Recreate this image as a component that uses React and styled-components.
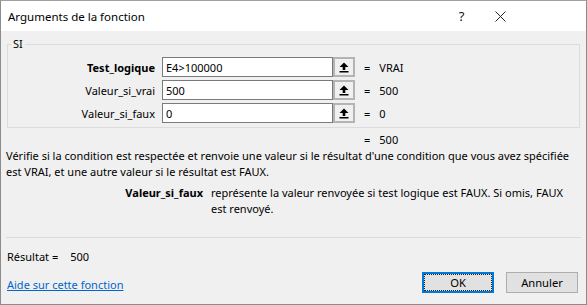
import React from 'react';
import styled, { createGlobalStyle } from 'styled-components';

const Global = createGlobalStyle`
  html, body {
    margin: 0;
    padding: 0;
    background: #f0f0f0;
  }
  body {
    font-family: 'Segoe UI', 'Noto Sans', 'Open Sans', sans-serif;
    font-size: 11px;
    color: #000;
  }
`;

const Window = styled.div`
  width: 587px;
  height: 305px;
  box-sizing: border-box;
  border: 1px solid #8c8c8c;
  border-top-color: #a0a0a0;
  display: flex;
  flex-direction: column;
  background: #f0f0f0;
  overflow: hidden;
`;

const TitleBar = styled.div`
  height: 30px;
  background: #fff;
  display: flex;
  align-items: center;
  padding-left: 7px;
  padding-right: 66px;
`;

const Title = styled.div`
  flex: 1;
  font-size: 11.5px;
`;

const TitleBtn = styled.div`
  width: 39px;
  height: 30px;
  display: flex;
  align-items: center;
  justify-content: center;
  font-size: 13px;
  color: #111;
`;

const Body = styled.div`
  flex: 1;
  display: flex;
  flex-direction: column;
  padding: 6px 6px 0 4px;
`;

const Group = styled.fieldset`
  margin: 0 0 0 2px;
  padding: 0 0 3px 0;
  width: 573px;
  box-sizing: border-box;
  border: 1px solid #dcdcdc;
  height: 91px;
  display: flex;
  flex-direction: column;
  legend {
    margin-left: 3px;
    padding: 0 2px;
    line-height: 14px;
  }
`;

const Rows = styled.div`
  margin-top: 6px;
  display: flex;
  flex-direction: column;
  gap: 3px;
`;

const Row = styled.div`
  display: flex;
  align-items: center;
  height: 20px;
`;

const ArgLabel = styled.div`
  width: 147px;
  text-align: right;
  padding-right: 7px;
  font-weight: ${p => (p.$bold ? 700 : 400)};
`;

const Input = styled.div`
  width: 166px;
  height: 18px;
  border: 1px solid #7a7a7a;
  background: #fff;
  display: flex;
  align-items: center;
  padding-left: 3px;
  box-sizing: content-box;
`;

const RefBtn = styled.div`
  width: 18px;
  height: 16px;
  border: 2px solid #b4b4b4;
  background: #f0f0f0;
  display: flex;
  align-items: center;
  justify-content: center;
`;

const Value = styled.div`
  margin-left: 9px;
  display: flex;
  gap: 9px;
`;

const TotalRow = styled.div`
  display: flex;
  padding-left: 359px;
  gap: 9px;
  margin-top: 4px;
  line-height: 16px;
`;

const Desc = styled.div`
  padding-left: 1px;
  line-height: 16px;
  white-space: nowrap;
`;

const ArgDesc = styled.div`
  display: flex;
  margin-top: 5px;
  line-height: 16px;
`;

const ArgName = styled.div`
  width: 198px;
  text-align: right;
  font-weight: 700;
  padding-right: 8px;
  flex-shrink: 0;
`;

const ArgText = styled.div`
  white-space: nowrap;
`;

const Separator = styled.div`
  margin-top: 20px;
  margin-left: 1px;
  height: 1px;
  width: 575px;
  background: #dadada;
`;

const Result = styled.div`
  margin-top: 11px;
  padding-left: 2px;
  display: flex;
  gap: 12px;
`;

const Footer = styled.div`
  display: flex;
  align-items: flex-end;
  margin-top: 8px;
`;

const HelpLink = styled.a`
  flex: 1;
  padding-left: 2px;
  line-height: 16px;
  color: #0066cc;
  text-decoration: underline;
  cursor: pointer;
`;

const Button = styled.button`
  width: 72px;
  height: 21px;
  box-sizing: border-box;
  margin-left: ${p => (p.$first ? 0 : '12px')};
  background: #e1e1e1;
  border: ${p => (p.$primary ? '2px solid #0078d7' : '1px solid #adadad')};
  font-family: inherit;
  font-size: 11.2px;
  color: #000;
  padding: 0;
  display: flex;
  align-items: center;
  justify-content: center;
  span {
    display: flex;
    align-items: center;
    justify-content: center;
    width: 100%;
    height: 100%;
    box-sizing: border-box;
    border: ${p => (p.$primary ? '1px dotted #222' : 'none')};
  }
`;

const UpArrow = () => (
  <svg width="10" height="11" viewBox="0 0 10 11">
    <path d="M5 0.5 L9.5 5 H6.3 V8 H3.7 V5 H0.5 Z" fill="#000" />
    <rect x="0.5" y="9" width="9" height="1.5" fill="#000" />
  </svg>
);

const args = [
  { name: 'Test_logique', value: 'E4>100000', result: 'VRAI', bold: true },
  { name: 'Valeur_si_vrai', value: '500', result: '500' },
  { name: 'Valeur_si_faux', value: '0', result: '0' },
];

export default function App() {
  return (
    <>
      <Global />
      <Window>
        <TitleBar>
          <Title>Arguments de la fonction</Title>
          <TitleBtn>?</TitleBtn>
          <TitleBtn>
            <svg width="11" height="11" viewBox="0 0 11 11">
              <path d="M0.5 0.5 L10.5 10.5 M10.5 0.5 L0.5 10.5" stroke="#222" strokeWidth="1" />
            </svg>
          </TitleBtn>
        </TitleBar>
        <Body>
          <Group>
            <legend>SI</legend>
            <Rows>
              {args.map(a => (
                <Row key={a.name}>
                  <ArgLabel $bold={a.bold}>{a.name}</ArgLabel>
                  <Input>{a.value}</Input>
                  <RefBtn>
                    <UpArrow />
                  </RefBtn>
                  <Value>
                    <span>=</span>
                    <span>{a.result}</span>
                  </Value>
                </Row>
              ))}
            </Rows>
          </Group>
          <TotalRow>
            <span>=</span>
            <span>500</span>
          </TotalRow>
          <Desc>
            Vérifie si la condition est respectée et renvoie une valeur si le résultat d'une condition que vous avez spécifiée
            <br />
            est VRAI, et une autre valeur si le résultat est FAUX.
          </Desc>
          <ArgDesc>
            <ArgName>Valeur_si_faux</ArgName>
            <ArgText>
              représente la valeur renvoyée si test logique est FAUX. Si omis, FAUX
              <br />
              est renvoyé.
            </ArgText>
          </ArgDesc>
          <Separator />
          <Result>
            <span>Résultat =</span>
            <span>500</span>
          </Result>
          <Footer>
            <HelpLink>Aide sur cette fonction</HelpLink>
            <Button $primary $first>
              <span>OK</span>
            </Button>
            <Button>
              <span>Annuler</span>
            </Button>
            <div style={{ width: 2 }} />
          </Footer>
        </Body>
      </Window>
    </>
  );
}
